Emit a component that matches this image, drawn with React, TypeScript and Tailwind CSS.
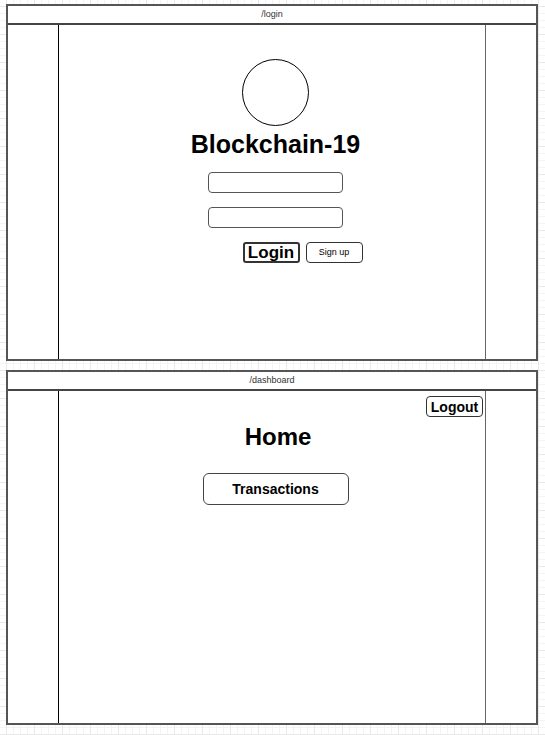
export default function App() {
  return (
    <div className="min-h-screen w-full bg-white bg-[linear-gradient(to_right,#e8e8e8_1px,transparent_1px),linear-gradient(to_bottom,#e8e8e8_1px,transparent_1px),linear-gradient(to_right,#f4f4f4_1px,transparent_1px),linear-gradient(to_bottom,#f4f4f4_1px,transparent_1px)] bg-[size:28px_28px,28px_28px,7px_7px,7px_7px] bg-[position:6px_6px] pl-[6px] pt-[4px] font-['Liberation_Sans',Arial,sans-serif] text-black">
      {/* /login frame */}
      <div className="flex h-[357px] w-[532px] flex-col border-2 border-[#555] bg-white">
        <div className="flex h-[19px] items-center justify-center border-b-2 border-[#444] text-[9px] text-[#333]">
          /login
        </div>
        <div className="flex flex-1">
          <div className="w-[51px] border-r border-black" />
          <div className="flex flex-1 flex-col items-center pl-[7px] pt-[34px]">
            <div className="h-[67px] w-[67px] rounded-full border border-black" />
            <h1 className="mt-[4px] text-[25px] font-bold leading-[28px]">Blockchain-19</h1>
            <input className="mt-[14px] h-[21px] w-[135px] rounded-[4px] border-[1.5px] border-[#555] bg-white outline-none" />
            <input className="mt-[14px] h-[21px] w-[135px] rounded-[4px] border-[1.5px] border-[#555] bg-white outline-none" />
            <div className="ml-[54px] mt-[14px] flex gap-[6px]">
              <button className="flex h-[21px] w-[57px] items-center justify-center rounded-[3px] border-2 border-[#333] text-[17px] font-bold leading-none">
                Login
              </button>
              <button className="flex h-[21px] w-[57px] items-center justify-center rounded-[4px] border border-[#333] text-[9px] leading-none">
                Sign up
              </button>
            </div>
          </div>
          <div className="w-[51px] border-l border-[#666]" />
        </div>
      </div>

      {/* /dashboard frame */}
      <div className="mt-[9px] flex h-[355px] w-[532px] flex-col border-2 border-[#555] bg-white">
        <div className="flex h-[19px] items-center justify-center border-b-2 border-[#444] text-[9px] text-[#333]">
          /dashboard
        </div>
        <div className="flex flex-1">
          <div className="w-[51px] border-r border-black" />
          <div className="flex flex-1 flex-col items-center pt-[5px] pl-[7px]">
            <button className="mr-[2px] flex h-[21px] w-[57px] items-center justify-center self-end rounded-[4px] border-[1.5px] border-[#333] text-[14px] font-bold leading-none">
              Logout
            </button>
            <h2 className="ml-[5px] mt-[6px] text-[24px] font-bold leading-[28px]">Home</h2>
            <button className="mt-[22px] flex h-[32px] w-[146px] items-center justify-center rounded-[6px] border border-[#444] text-[14px] font-bold">
              Transactions
            </button>
          </div>
          <div className="w-[51px] border-l border-[#666]" />
        </div>
      </div>
    </div>
  );
}
